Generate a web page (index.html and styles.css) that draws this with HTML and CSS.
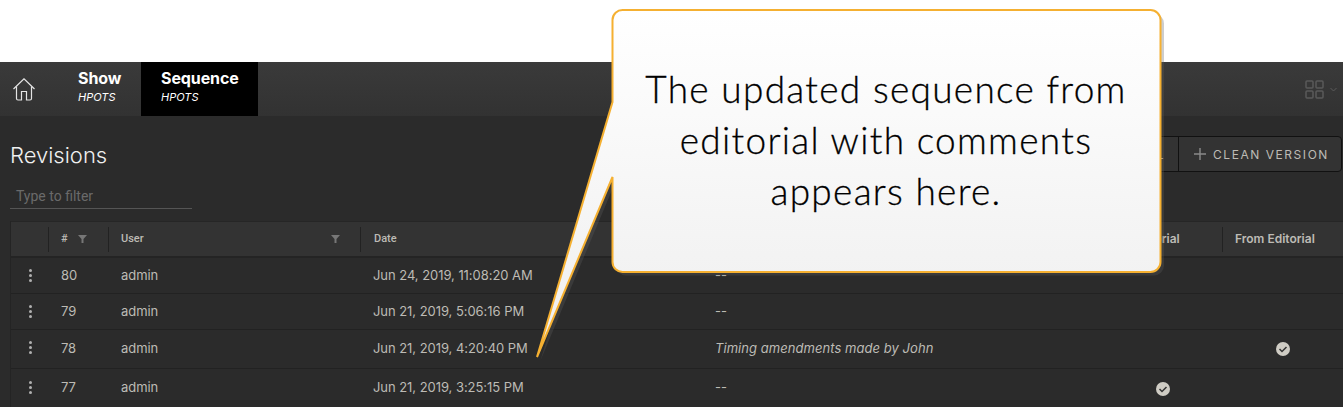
FILE: index.html
```html
<!DOCTYPE html>
<html>
<head>
    <meta charset="utf-8" />
    <title>Revisions</title>
    <link rel="stylesheet" href="styles.css">
</head>
<body>
    <div class="top_space"></div>
    <div class="nav">
        <div class="home">
            <svg width="22" height="23" viewBox="0 0 22 23" fill="none" stroke="#e4e4e4" stroke-width="1.2">
                <path d="M.5 11 11 .8 21.500 11" />
                <path d="M3.500 8.500V20.500Q3.500 22 5 22H8.500V13.500H13.500V22H17Q18.500 22 18.500 20.500V8.500" />
            </svg>
        </div>
        <div class="tab">
            <div class="tab_name">Show</div>
            <div class="tab_sub">HPOTS</div>
        </div>
        <div class="tab tab_active">
            <div class="tab_name">Sequence</div>
            <div class="tab_sub">HPOTS</div>
        </div>
        <div class="nav_right">
            <svg width="19" height="19" viewBox="0 0 19 19" fill="none" stroke="#5a5a5a" stroke-width="1.5">
                <rect x="1" y="1" width="7" height="7" rx="1" />
                <rect x="11" y="1" width="7" height="7" rx="1" />
                <rect x="1" y="11" width="7" height="7" rx="1" />
                <rect x="11" y="11" width="7" height="7" rx="1" />
            </svg>
            <svg width="7" height="5" viewBox="0 0 7 5" fill="none" stroke="#5a5a5a" stroke-width="1">
                <path d="M.5 1 3.500 4 6.500 1" />
            </svg>
        </div>
    </div>

    <div class="content">
        <div class="title_row">
            <h2>Revisions</h2>
            <div class="btn_group">
                <div class="btn btn_first">FINAL</div>
                <div class="btn">
                    <svg class="plus" width="12" height="12" viewBox="0 0 12 12" fill="none" stroke="#8a8a8a" stroke-width="1.4"><path d="M6 0V12M0 6H12" /></svg>
                    CLEAN VERSION
                </div>
            </div>
        </div>
        <div class="filter">Type to filter</div>

        <div class="table">
            <div class="row head">
                <div class="cell"></div>
                <div class="cell sep">#<svg class="funnel funnel_num" width="9" height="8" viewBox="0 0 9 8"><path d="M0 0H9L5.500 4V8H3.500V4Z" /></svg></div>
                <div class="cell sep user_head">User<svg class="funnel" width="9" height="8" viewBox="0 0 9 8"><path d="M0 0H9L5.500 4V8H3.500V4Z" /></svg></div>
                <div class="cell sep date_head">Date</div>
                <div class="cell">Comment</div>
                <div class="cell head_wide">To Editorial</div>
                <div class="cell sep head_wide">From Editorial</div>
            </div>
            <div class="row h36">
                <div class="cell dots"><i></i><i></i><i></i></div>
                <div class="cell">80</div>
                <div class="cell">admin</div>
                <div class="cell">Jun 24, 2019, 11:08:20 AM</div>
                <div class="cell">--</div>
                <div class="cell"></div>
                <div class="cell"></div>
            </div>
            <div class="row h36">
                <div class="cell dots"><i></i><i></i><i></i></div>
                <div class="cell">79</div>
                <div class="cell">admin</div>
                <div class="cell">Jun 21, 2019, 5:06:16 PM</div>
                <div class="cell">--</div>
                <div class="cell"></div>
                <div class="cell"></div>
            </div>
            <div class="row h39">
                <div class="cell dots"><i></i><i></i><i></i></div>
                <div class="cell">78</div>
                <div class="cell">admin</div>
                <div class="cell">Jun 21, 2019, 4:20:40 PM</div>
                <div class="cell comment">Timing amendments made by John</div>
                <div class="cell"></div>
                <div class="cell center">
                    <svg width="14" height="14" viewBox="0 0 14 14"><circle cx="7" cy="7" r="7" fill="#cfccc4" /><path d="M3.500 7 6 9.500 10.500 5" fill="none" stroke="#333" stroke-width="1.500" /></svg>
                </div>
            </div>
            <div class="row h39 last">
                <div class="cell dots"><i></i><i></i><i></i></div>
                <div class="cell">77</div>
                <div class="cell">admin</div>
                <div class="cell">Jun 21, 2019, 3:25:15 PM</div>
                <div class="cell">--</div>
                <div class="cell center">
                    <svg width="14" height="14" viewBox="0 0 14 14"><circle cx="7" cy="7" r="7" fill="#cfccc4" /><path d="M3.500 7 6 9.500 10.500 5" fill="none" stroke="#333" stroke-width="1.500" /></svg>
                </div>
                <div class="cell"></div>
            </div>
        </div>
    </div>

    <!-- выноска поверх страницы -->
    <svg class="callout_shape" width="1343" height="407" viewBox="0 0 1343 407">
        <defs>
            <linearGradient id="callout_fill" x1="0" y1="0" x2="0" y2="1">
                <stop offset="0" stop-color="#ffffff" />
                <stop offset="1" stop-color="#eeeeee" />
            </linearGradient>
        </defs>
        <path class="callout_shadow" d="M623 10H1150.500A10 10 0 0 1 1160.500 20V262A10 10 0 0 1 1150.500 272H623A10 10 0 0 1 612.500 262V177L537 357 612.500 102V20A10 10 0 0 1 623 10Z" transform="translate(3.500 3.500)" />
        <path class="callout_body" fill="url(#callout_fill)" d="M623 10H1150.500A10 10 0 0 1 1160.500 20V262A10 10 0 0 1 1150.500 272H623A10 10 0 0 1 612.500 262V177L537 357 612.500 102V20A10 10 0 0 1 623 10Z" />
    </svg>
    <div class="callout_text">The updated sequence from<br />editorial with comments<br />appears here.</div>
</body>
</html>
```

FILE: styles.css
```css
* {
    box-sizing: border-box;
}

body {
    margin: 0;
    height: 407px;
    overflow: hidden;
    background: #2b2b2b;
    font-family: "Inter", "Liberation Sans", sans-serif;
    color: #bdbbb5;
}

.top_space {
    height: 62px;
    background: #fff;
}

.nav {
    display: flex;
    height: 54px;
    background: linear-gradient(#3a3a3a, #323232);
}

.home {
    display: flex;
    align-items: center;
    width: 58px;
    padding-left: 13px;
}

.tab {
    width: 83px;
    padding: 7px 0 0 20px;
    color: #fff;
}

.tab_active {
    width: 117px;
    background: #000;
}

.tab_name {
    font-size: 16px;
    line-height: 19px;
    font-weight: 700;
    letter-spacing: -0.1px;
}

.tab_sub {
    margin-top: 3px;
    font-size: 11px;
    line-height: 12px;
    font-style: italic;
}

.nav_right {
    display: flex;
    align-items: center;
    gap: 6px;
    margin-left: auto;
    padding-right: 6px;
}

.content {
    padding: 20px 1px 0 10px;
}

.title_row {
    display: flex;
    justify-content: space-between;
    align-items: center;
    height: 36px;
}

h2 {
    margin: 2px 0 0;
    font-size: 22px;
    font-weight: 300;
    color: #f0f0f0;
}

.btn_group {
    display: flex;
    height: 36px;
    border: 1px solid #111;
    border-radius: 4px;
    background: #333;
}

.btn {
    display: flex;
    align-items: center;
    width: 162px;
    padding-left: 15px;
    font-size: 12px;
    letter-spacing: 1.550px;
    color: #bdbbb5;
}

.btn_first {
    justify-content: flex-end;
    padding-right: 13px;
    border-right: 1px solid #111;
}

.plus {
    margin-right: 7px;
}

.filter {
    width: 182px;
    height: 26px;
    margin-top: 11px;
    padding: 5px 0 0 6px;
    border-bottom: 1px solid #555;
    font-family: "Roboto", sans-serif;
    font-size: 14px;
    color: #6a6a6a;
}

.table {
    margin-top: 12px;
    border-left: 1px solid #242424;
    width: 1333px;
}

.row {
    display: grid;
    grid-template-columns: 37px 60px 252px 342px 400px 120px 120px;
    align-items: center;
    border-bottom: 1px solid #222;
    font-size: 13px;
    letter-spacing: -0.05px;
}

.h36 {
    height: 36px;
}

.h36 .cell {
    padding-bottom: 1px;
}

.h39 {
    height: 39px;
}

.h39 .cell {
    padding-bottom: 3px;
}

.last {
    border-bottom: none;
}

.head {
    height: 37px;
    background: #333;
    border-top: 1px solid #262626;
    border-bottom: 2px solid #242424;
    font-family: "Roboto", sans-serif;
    font-size: 11px;
    font-weight: 500;
    letter-spacing: 0;
}

.cell {
    display: flex;
    align-items: center;
    padding-left: 13px;
}

.head .cell {
    padding-bottom: 1px;
}

.sep {
    height: 25px;
    padding-left: 12px;
    border-left: 1px solid #222;
}

.date_head {
    padding-left: 13px;
}

.head_wide {
    font-family: "Inter", sans-serif;
    font-size: 12px;
    font-weight: 600;
    white-space: nowrap;
}

.user_head {
    justify-content: space-between;
    padding-right: 20px;
}

.funnel {
    fill: #777;
}

.funnel_num {
    margin-left: 10px;
    margin-top: 1px;
}

.dots {
    flex-direction: column;
    gap: 2px;
    padding-left: 2px;
}

.dots i {
    width: 3px;
    height: 3px;
    border-radius: 50%;
    background: #b0b0b0;
}

.comment {
    font-style: italic;
    letter-spacing: 0.05px;
    white-space: nowrap;
}

.h39 .center {
    justify-content: center;
    padding: 0 0 0 2px;
}

.callout_shape {
    position: absolute;
    left: 0;
    top: 0;
}

.callout_shadow {
    fill: rgba(94, 94, 94, 0.31);
}

.callout_body {
    stroke: #f5b031;
    stroke-width: 2;
}

.callout_text {
    position: absolute;
    left: 612px;
    top: 63px;
    width: 548px;
    font-family: "Lato", sans-serif;
    font-size: 37px;
    font-weight: 300;
    line-height: 51px;
    letter-spacing: 1.300px;
    -webkit-text-stroke: 0.3px #000;
    text-align: center;
    color: #000;
}
```
